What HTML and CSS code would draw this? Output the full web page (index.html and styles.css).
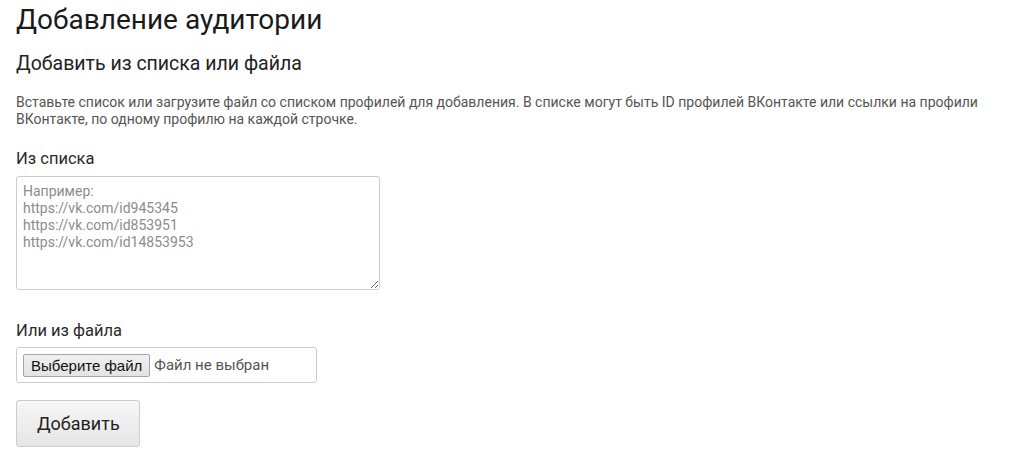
FILE: index.html
```html
<!DOCTYPE html>
<html lang="ru">
<head>
<meta charset="utf-8">
<title>Добавление аудитории</title>
<link rel="stylesheet" href="styles.css">
</head>
<body>
<div class="page">
  <h1 class="title">Добавление аудитории</h1>
  <h2 class="subtitle">Добавить из списка или файла</h2>
  <p class="desc">Вставьте список или загрузите файл со списком профилей для добавления. В списке могут быть ID профилей ВКонтакте или ссылки на профили ВКонтакте, по одному профилю на каждой строчке.</p>
  <div class="field">
    <label class="label" for="list">Из списка</label>
    <textarea id="list" class="list-input" placeholder="Например:&#10;https://vk.com/id945345&#10;https://vk.com/id853951&#10;https://vk.com/id14853953"></textarea>
  </div>
  <div class="field field-file">
    <div class="label">Или из файла</div>
    <div class="filebox">
      <button type="button" class="file-btn">Выберите файл</button>
      <span class="file-name">Файл не выбран</span>
    </div>
  </div>
  <button type="button" class="submit">Добавить</button>
</div>
</body>
</html>
```
FILE: styles.css
```css
html, body {
  margin: 0;
  padding: 0;
  background: #fff;
}
body {
  font-family: Roboto, "Liberation Sans", Arial, sans-serif;
  color: #333;
}
.page {
  padding: 0 16px;
  display: flex;
  flex-direction: column;
  align-items: flex-start;
}
.title {
  margin: 2px 0 0;
  font-size: 28px;
  line-height: 36px;
  font-weight: 400;
  color: #1a1a1a;
}
.subtitle {
  margin: 13px 0 0;
  font-size: 19.5px;
  line-height: 26px;
  font-weight: 400;
  color: #222;
}
.desc {
  margin: 17px 0 0;
  font-size: 14px;
  line-height: 17px;
  color: #555;
  max-width: 980px;
}
.field {
  display: flex;
  flex-direction: column;
  align-items: flex-start;
  margin-top: 21px;
}
.field-file {
  margin-top: 31px;
}
.label {
  font-size: 16.5px;
  line-height: 20px;
  color: #2a2a2a;
}
.list-input {
  display: block;
  margin-top: 7px;
  box-sizing: border-box;
  width: 364px;
  height: 114px;
  padding: 6px 6px;
  border: 1px solid #ccc;
  border-radius: 3px;
  font-family: Roboto, "Liberation Sans", Arial, sans-serif;
  font-size: 14px;
  line-height: 17px;
  color: #333;
  resize: both;
  outline: none;
}
.list-input::placeholder {
  color: #8c8c8c;
}
.filebox {
  margin-top: 6px;
  box-sizing: border-box;
  width: 301px;
  height: 36px;
  padding: 6px;
  border: 1px solid #ccc;
  border-radius: 3px;
  display: flex;
  align-items: center;
  gap: 4px;
}
.file-btn {
  box-sizing: border-box;
  height: 23px;
  padding: 0 7px;
  border: 1px solid #a6a6a6;
  border-radius: 2px;
  background: linear-gradient(#f0f0f0, #e3e3e3);
  font-family: "Liberation Sans", Arial, sans-serif;
  font-size: 15px;
  color: #111;
}
.file-name {
  font-size: 15px;
  color: #555;
}
.submit {
  margin-top: 17px;
  box-sizing: border-box;
  width: 124px;
  height: 47px;
  padding: 0 20px;
  border: 1px solid #ccc;
  border-radius: 3px;
  background: linear-gradient(#f6f6f6, #e6e6e6);
  font-family: Roboto, "Liberation Sans", Arial, sans-serif;
  font-size: 18px;
  color: #222;
}
```
